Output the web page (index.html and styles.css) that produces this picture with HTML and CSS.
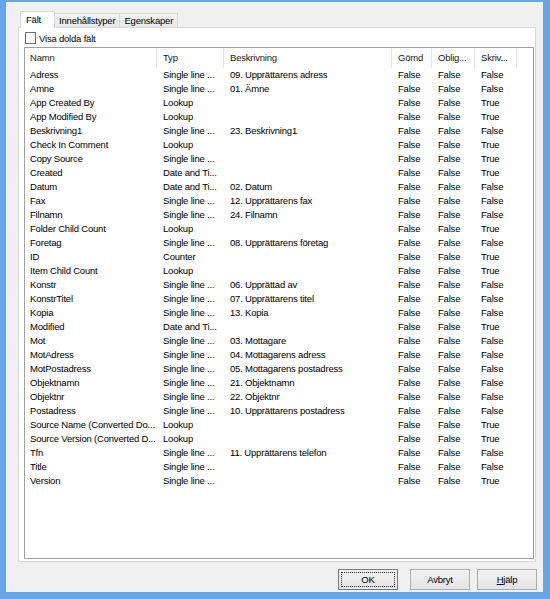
FILE: index.html
```html
<!DOCTYPE html>
<html lang="sv">
<head>
<meta charset="utf-8">
<title>Fält</title>
<link rel="stylesheet" href="styles.css">
</head>
<body>
<div class="window">
  <div class="client">
    <div class="tabs">
      <div class="tab active">Fält</div>
      <div class="tab">Innehållstyper</div>
      <div class="tab">Egenskaper</div>
    </div>
    <div class="panel">
      <div class="check"><span class="box"></span><span>Visa dolda fält</span></div>
      <div class="list">
        <div class="row head"><span>Namn</span><span>Typ</span><span>Beskrivning</span><span>Gömd</span><span>Oblig...</span><span>Skriv...</span><span></span></div>
        <div class="row"><span>Adress</span><span>Single line ...</span><span>09. Upprättarens adress</span><span>False</span><span>False</span><span>False</span></div>
        <div class="row"><span>Amne</span><span>Single line ...</span><span>01. Ämne</span><span>False</span><span>False</span><span>False</span></div>
        <div class="row"><span>App Created By</span><span>Lookup</span><span></span><span>False</span><span>False</span><span>True</span></div>
        <div class="row"><span>App Modified By</span><span>Lookup</span><span></span><span>False</span><span>False</span><span>True</span></div>
        <div class="row"><span>Beskrivning1</span><span>Single line ...</span><span>23. Beskrivning1</span><span>False</span><span>False</span><span>False</span></div>
        <div class="row"><span>Check In Comment</span><span>Lookup</span><span></span><span>False</span><span>False</span><span>True</span></div>
        <div class="row"><span>Copy Source</span><span>Single line ...</span><span></span><span>False</span><span>False</span><span>True</span></div>
        <div class="row"><span>Created</span><span>Date and Ti...</span><span></span><span>False</span><span>False</span><span>True</span></div>
        <div class="row"><span>Datum</span><span>Date and Ti...</span><span>02. Datum</span><span>False</span><span>False</span><span>False</span></div>
        <div class="row"><span>Fax</span><span>Single line ...</span><span>12. Upprättarens fax</span><span>False</span><span>False</span><span>False</span></div>
        <div class="row"><span>Filnamn</span><span>Single line ...</span><span>24. Filnamn</span><span>False</span><span>False</span><span>False</span></div>
        <div class="row"><span>Folder Child Count</span><span>Lookup</span><span></span><span>False</span><span>False</span><span>True</span></div>
        <div class="row"><span>Foretag</span><span>Single line ...</span><span>08. Upprättarens företag</span><span>False</span><span>False</span><span>False</span></div>
        <div class="row"><span>ID</span><span>Counter</span><span></span><span>False</span><span>False</span><span>True</span></div>
        <div class="row"><span>Item Child Count</span><span>Lookup</span><span></span><span>False</span><span>False</span><span>True</span></div>
        <div class="row"><span>Konstr</span><span>Single line ...</span><span>06. Upprättad av</span><span>False</span><span>False</span><span>False</span></div>
        <div class="row"><span>KonstrTitel</span><span>Single line ...</span><span>07. Upprättarens titel</span><span>False</span><span>False</span><span>False</span></div>
        <div class="row"><span>Kopia</span><span>Single line ...</span><span>13. Kopia</span><span>False</span><span>False</span><span>False</span></div>
        <div class="row"><span>Modified</span><span>Date and Ti...</span><span></span><span>False</span><span>False</span><span>True</span></div>
        <div class="row"><span>Mot</span><span>Single line ...</span><span>03. Mottagare</span><span>False</span><span>False</span><span>False</span></div>
        <div class="row"><span>MotAdress</span><span>Single line ...</span><span>04. Mottagarens adress</span><span>False</span><span>False</span><span>False</span></div>
        <div class="row"><span>MotPostadress</span><span>Single line ...</span><span>05. Mottagarens postadress</span><span>False</span><span>False</span><span>False</span></div>
        <div class="row"><span>Objektnamn</span><span>Single line ...</span><span>21. Objektnamn</span><span>False</span><span>False</span><span>False</span></div>
        <div class="row"><span>Objektnr</span><span>Single line ...</span><span>22. Objektnr</span><span>False</span><span>False</span><span>False</span></div>
        <div class="row"><span>Postadress</span><span>Single line ...</span><span>10. Upprättarens postadress</span><span>False</span><span>False</span><span>False</span></div>
        <div class="row"><span>Source Name (Converted Do...</span><span>Lookup</span><span></span><span>False</span><span>False</span><span>True</span></div>
        <div class="row"><span>Source Version (Converted D...</span><span>Lookup</span><span></span><span>False</span><span>False</span><span>True</span></div>
        <div class="row"><span>Tfn</span><span>Single line ...</span><span>11. Upprättarens telefon</span><span>False</span><span>False</span><span>False</span></div>
        <div class="row"><span>Title</span><span>Single line ...</span><span></span><span>False</span><span>False</span><span>False</span></div>
        <div class="row"><span>Version</span><span>Single line ...</span><span></span><span>False</span><span>False</span><span>True</span></div>
      </div>
    </div>
    <div class="buttons">
      <button class="btn default"><span class="focus">OK</span></button>
      <button class="btn cancel">Avbryt</button>
      <button class="btn"><span class="ul">H</span>jälp</button>
    </div>
  </div>
</div>
</body>
</html>
```
FILE: styles.css
```css
* { box-sizing: border-box; }
html, body { margin: 0; padding: 0; }
body {
  width: 550px;
  height: 599px;
  font-family: "Liberation Sans", Arial, sans-serif;
  font-size: 9.5px;
  letter-spacing: -0.2px;
  color: #000;
  background: #66a5e6;
}
.window {
  width: 550px;
  height: 599px;
  border-style: solid;
  border-color: #66a5e6;
  border-width: 2px 7px 7px 6px;
  background: #f0f0f0;
}
.client {
  height: 590px;
  display: flex;
  flex-direction: column;
  padding: 9px 7px 2px 12px;
}
.tabs {
  height: 16px;
  display: flex;
  align-items: flex-end;
  padding-left: 2px;
}
.tab {
  height: 14px;
  line-height: 13px;
  padding: 0 4px;
  border: 1px solid #d9d9d9;
  border-bottom: none;
  background: linear-gradient(#f3f3f3, #e8e8e8);
  margin-right: -1px;
  white-space: nowrap;
}
.tab.active {
  height: 17px;
  line-height: 16px;
  margin-bottom: -1px;
  padding: 0 13px 0 5px;
  background: #fff;
  position: relative;
  z-index: 1;
}
.panel {
  height: 535px;
  border: 1px solid #d9d9d9;
  background: #fff;
  display: flex;
  flex-direction: column;
  padding: 4px 1px 2px 5px;
}
.check {
  height: 12px;
  display: flex;
  align-items: center;
  gap: 3px;
  padding-left: 1px;
}
.box {
  width: 11px;
  height: 12px;
  border: 1px solid #707070;
  background: #fff;
}
.list {
  margin-top: 3px;
  height: 512px;
  border: 1px solid #a0a0a0;
  background: #fff;
  overflow: hidden;
}
.row {
  display: grid;
  grid-template-columns: 132px 67px 168px 40px 43px 42px 1fr;
  height: 14px;
  line-height: 14px;
  white-space: nowrap;
}
.row span {
  padding-left: 6px;
  overflow: hidden;
}
.row span:first-child { padding-left: 5px; }
.row.head {
  height: 20px;
  line-height: 20px;
  color: #1a1a1a;
}
.row.head span { border-right: 1px solid #e5e5e5; }
.row.head span:last-child { border-right: none; }
.buttons {
  margin-top: 7px;
  height: 21px;
  display: flex;
  justify-content: flex-end;
  margin-right: -1px;
}
.btn {
  width: 60px;
  height: 21px;
  font: inherit;
  letter-spacing: inherit;
  color: #000;
  border: 1px solid #acacac;
  background: linear-gradient(#f2f2f2, #e3e3e3);
  padding: 0;
  margin-left: 7px;
}
.btn.default {
  border-color: #7a7a7a;
  padding: 2px;
}
.btn.cancel { margin-left: 12px; }
.focus {
  display: flex;
  align-items: center;
  justify-content: center;
  height: 100%;
  border: 1px dotted #333;
}
.ul { text-decoration: underline; }
```
